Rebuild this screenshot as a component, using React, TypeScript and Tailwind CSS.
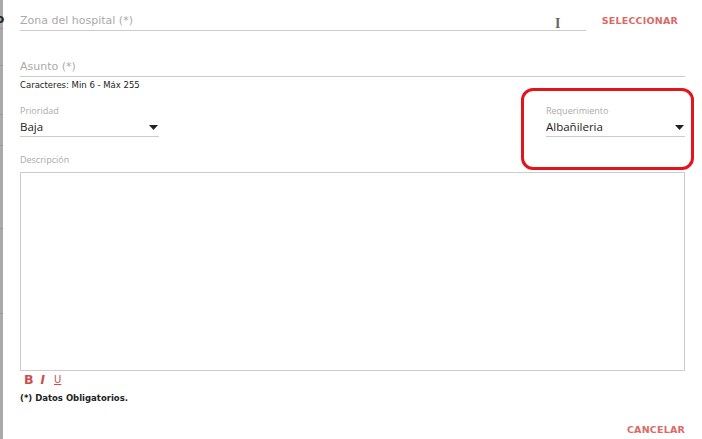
import React from 'react';

const dejavu = "font-['DejaVu_Sans',sans-serif]";
const open = "font-['Open_Sans',sans-serif]";

const Caret = () => (
  <svg width="9" height="5" viewBox="0 0 9 5" className="shrink-0">
    <path d="M0 0h9L4.5 5z" fill="#222" />
  </svg>
);

const SelectField: React.FC<{ label: string; value: string; width: string }> = ({ label, value, width }) => (
  <div className={`flex flex-col ${width}`}>
    <div className={`${open} text-[9px] leading-[12px] text-[#aaa]`}>{label}</div>
    <div className="flex items-center justify-between border-b border-[#ccc] pt-[2px] pb-[1px] pr-[1px]">
      <div className={`${open} text-[11.5px] leading-[16px] text-[#222]`}>{value}</div>
      <Caret />
    </div>
  </div>
);

export default function App() {
  return (
    <div className="relative flex w-[702px] h-[439px] overflow-hidden bg-white">
      {/* Left sliver of the page behind the dialog */}
      <div className="flex flex-col w-[3px] bg-[#a9a9a9]">
        <div className="h-[28px]" />
        <div className="h-[1px] bg-[#999]" />
        <div className="h-[36px]" />
        <div className="h-[1px] bg-[#999]" />
        <div className="h-[48px]" />
        <div className="h-[1px] bg-[#999]" />
        <div className="h-[30px]" />
        <div className="h-[1px] bg-[#999]" />
        <div className="h-[82px]" />
        <div className="h-[1px] bg-[#999]" />
        <div className="h-[84px]" />
        <div className="h-[1px] bg-[#999]" />
      </div>
      <div className={`absolute left-[-4px] top-[10px] ${dejavu} text-[12px] font-bold text-[#222]`}>o</div>

      <div className="flex flex-col flex-1 pl-[17px] pr-[17px]">
        {/* Zona del hospital */}
        <div className="flex items-end pt-[14px]">
          <div className={`relative flex-1 border-b border-[#ccc] pb-[2px] ${dejavu} text-[11px] leading-[14px] text-[#aaa]`}>
            Zona del hospital (*)
            <span className="absolute left-[535px] top-[3px] font-['Liberation_Serif',serif] text-[14px] leading-[14px] font-bold text-[#666]">I</span>
          </div>
          <button className={`ml-[16px] mr-[7px] mb-[4px] ${dejavu} text-[9.5px] leading-[12px] font-bold tracking-[0.2px] text-[#d96a66]`}>
            SELECCIONAR
          </button>
        </div>

        {/* Asunto */}
        <div className={`mt-[29px] border-b border-[#ccc] pb-[2px] ${dejavu} text-[11px] leading-[14px] text-[#aaa]`}>
          Asunto (*)
        </div>
        <div className={`mt-[2px] ${dejavu} text-[8.5px] leading-[13px] text-[#222]`}>Caracteres: Min 6 - Máx 255</div>

        {/* Prioridad / Requerimiento */}
        <div className="flex justify-between mt-[13px]">
          <SelectField label="Prioridad" value="Baja" width="w-[139px]" />
          <SelectField label="Requerimiento" value="Albañileria" width="w-[139px]" />
        </div>

        {/* Descripción */}
        <div className={`mt-[17px] ${open} text-[9px] leading-[12px] text-[#aaa]`}>Descripción</div>
        <div className="mt-[6px] h-[199px] border border-[#ccc]" />

        <div className="flex items-center pl-[4px] mt-[2px] h-[14px] leading-[14px]">
          <span className={`${dejavu} text-[12.5px] font-bold text-[#c9504c]`}>B</span>
          <span className={`ml-[7px] ${dejavu} text-[12px] font-bold italic text-[#c9504c]`}>I</span>
          <span className={`ml-[9px] ${dejavu} text-[10px] underline text-[#c9504c]`}>U</span>
        </div>
        <div className={`mt-[5px] ${dejavu} text-[8.5px] leading-[12px] font-bold text-[#222]`}>(*) Datos Obligatorios.</div>

        <div className="flex justify-end mt-auto mb-[3px]">
          <button className={`${dejavu} text-[9.5px] leading-[12px] font-bold tracking-[0.2px] text-[#d96a66]`}>CANCELAR</button>
        </div>
      </div>

      {/* Red annotation highlight */}
      <div className="absolute left-[521px] top-[88px] w-[173px] h-[82px] rounded-[12px] border-[3px] border-[#e3141c]" />
    </div>
  );
}
